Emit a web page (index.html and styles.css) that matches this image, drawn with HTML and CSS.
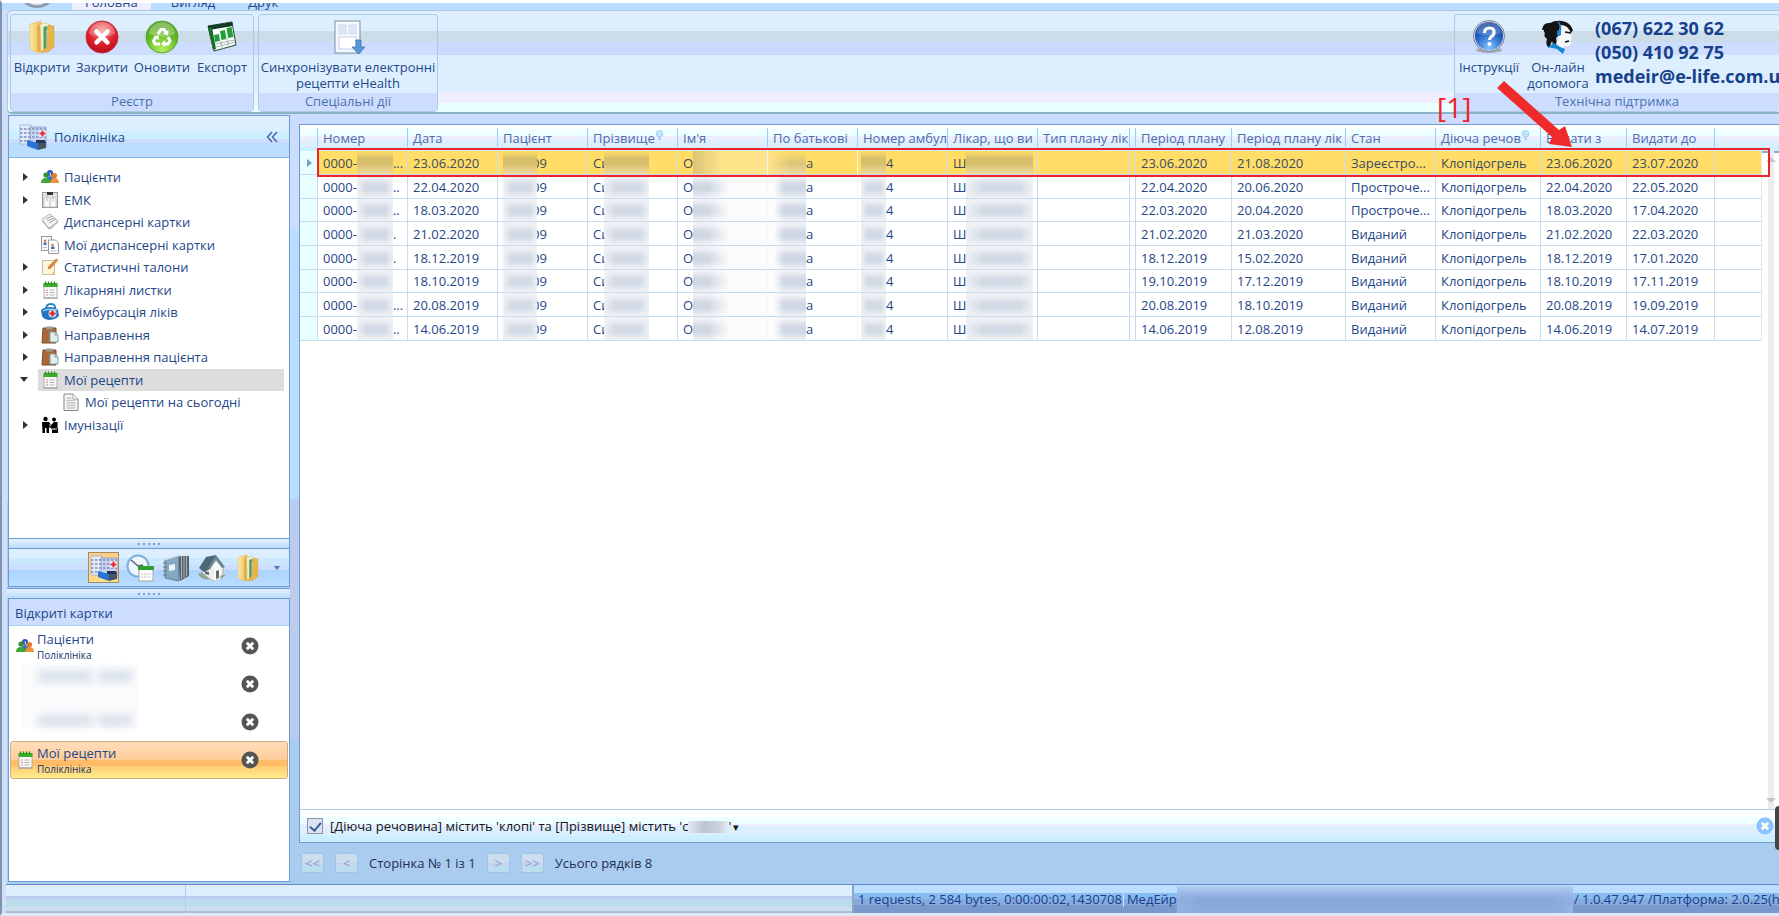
FILE: index.html
```
<!DOCTYPE html>
<html lang="uk">
<head>
<meta charset="utf-8">
<title>МедЕйр – Мої рецепти</title>
<link rel="stylesheet" href="styles.css">
</head>
<body>
<svg class="defs" aria-hidden="true">
  <defs>
    <linearGradient id="gFold" x1="0" x2="1"><stop offset="0" stop-color="#fbeaa4"/><stop offset="1" stop-color="#edbb4c"/></linearGradient>
    <radialGradient id="gRed" cx=".5" cy=".3" r=".7"><stop offset="0" stop-color="#f79a94"/><stop offset=".6" stop-color="#e0202c"/><stop offset="1" stop-color="#b80d18"/></radialGradient>
    <radialGradient id="gGreen" cx=".5" cy=".9" r=".9"><stop offset="0" stop-color="#b8ee62"/><stop offset=".6" stop-color="#62b822"/><stop offset="1" stop-color="#4d9a1c"/></radialGradient>
    <radialGradient id="gBlue" cx=".5" cy=".9" r=".9"><stop offset="0" stop-color="#7fc4ff"/><stop offset=".6" stop-color="#1f5fc4"/><stop offset="1" stop-color="#123f94"/></radialGradient>
    <symbol id="folder" viewBox="0 0 34 34">
      <path d="M5 4l11-3v31l-3 1-8-4z" fill="url(#gFold)" stroke="#e0bc62" stroke-width=".5"/>
      <path d="M15 4l7-1 3 2-3 26-6 2z" fill="#f3ecd0" stroke="#c9ab5c" stroke-width=".5"/>
      <path d="M18.500 7l4-1v20l-4 5z" fill="#4aa05c"/><path d="M21.500 10l2-1v18l-2 2z" fill="#dfe9e2"/>
      <path d="M23 5l6 1v21l-6 5h-7l6-5z" fill="#eab548" stroke="#d29c38" stroke-width=".5"/>
      <path d="M12 6l3-1v27l-3-1z" fill="#d9a03a" opacity=".6"/>
    </symbol>
    <symbol id="close" viewBox="0 0 34 34">
      <circle cx="17" cy="17" r="16" fill="url(#gRed)" stroke="#c03038"/>
      <path d="M4 14a13 12 0 0 1 26 0q-13 5-26 0z" fill="#fff" opacity=".25"/>
      <path d="M11.500 11.500l11 11m0-11l-11 11" stroke="#fff" stroke-width="4.500" stroke-linecap="round"/>
    </symbol>
    <symbol id="recycle" viewBox="0 0 34 34">
      <circle cx="17" cy="17" r="16" fill="url(#gGreen)" stroke="#5aa52c"/>
      <path d="M4 14a13 12 0 0 1 26 0q-13 5-26 0z" fill="#fff" opacity=".3"/>
      <g fill="none" stroke="#fff" stroke-width="3"><path d="M13 14l3-4.500h3l2.500 4"/><path d="M23 17l2 4-2 3h-4"/><path d="M15 24h-5l-1.500-3 2.500-4"/></g>
      <path d="M23.500 10l-.5 5.500-5-2zM20 20v7l-4-3.300zM8 17l5.500-2 .5 5z" fill="#fff"/>
    </symbol>
    <symbol id="export" viewBox="0 0 34 34">
      <path d="M3 6l24-4 4 23-22 6z" fill="#fff" stroke="#1c4a2c" stroke-width="1"/>
      <path d="M3 6l24-4 .7 4L4 10z" fill="#123c22"/><path d="M3 8l4-1 4 22-3 1z" fill="#1c6a30"/>
      <path d="M9 15l5-1 1 7-5 1zM15 11l5-1 1.500 9-5 1zM21.500 8l5-1 2 10-5.500 1z" fill="#23a03c"/>
      <path d="M10 24l20-4M11 27l19-5M16 21l1.500 8M22 19l1.500 8" stroke="#a9b4ae" stroke-width="1"/>
    </symbol>
    <symbol id="sync" viewBox="0 0 34 34">
      <rect x="4" y="1" width="25" height="32" fill="#f4f8fc" stroke="#7f9199"/>
      <rect x="8" y="5" width="7" height="9" fill="#dbe7f8" stroke="#c6d4ea" stroke-width=".7"/><rect x="18" y="5" width="7" height="9" fill="#dbe7f8" stroke="#c6d4ea" stroke-width=".7"/>
      <rect x="8" y="17" width="17" height="12" fill="#fff" stroke="#b6c8e4" stroke-width=".8"/>
      <path d="M25 20h5v7h4l-6.500 7L21 27h4z" fill="#5a96d8" stroke="#3d74b8" stroke-width=".8"/>
    </symbol>
    <symbol id="help" viewBox="0 0 34 34">
      <ellipse cx="17" cy="30" rx="13" ry="3" fill="#777" opacity=".5"/>
      <circle cx="17" cy="16" r="15.500" fill="#d4dae4" stroke="#7a8494"/>
      <circle cx="17" cy="16" r="14" fill="url(#gBlue)"/>
      <path d="M5 13a12 11 0 0 1 24 0q-12 5-24 0z" fill="#fff" opacity=".22"/>
      <path d="M12.500 13q0-5 5-5t4.500 4.500q0 2.500-2.500 4-2 1.200-2 3.500" fill="none" stroke="#fff" stroke-width="3.200"/><circle cx="17.500" cy="24" r="2" fill="#fff"/>
    </symbol>
    <symbol id="operator" viewBox="0 0 34 34">
      <path d="M1 10Q2 2 9 3q5-3 12-2 8 1 11 9l-2 3q-3-6-9-6-2 8-6 11l1 5-4 4q0-4-1-6l-3 7q-4-3-2-9-4-3-2-6-2-1-1-3z" fill="#141414"/>
      <path d="M19 5q9 0 10 8l2 4-1 3q1 5-2 6l-5 0-1 3-7-6q3-4 3-8z" fill="#f6f8fa"/>
      <path d="M24 12l6 1M24 22l4-1" stroke="#141414" stroke-width="1.600"/>
      <path d="M17 2q4 4 2 10" fill="none" stroke="#1288d0" stroke-width="1.500"/><rect x="16" y="10" width="4" height="6" rx="2" fill="#1288d0"/>
      <path d="M7 27l6-4 6 4 5 2-2 5-6-5z" fill="#1288d0"/>
    </symbol>
    <symbol id="clinic" viewBox="0 0 28 28">
      <path d="M1 2h11v19H1z" fill="#e4eaf6" stroke="#9aa9cc" stroke-width=".7"/><path d="M11 4h16v20H11z" fill="#c8d4ee" stroke="#7a8cc0" stroke-width=".7"/>
      <path d="M1 6h26M1 10h26M1 14h26M1 18h10" stroke="#7a8fc4" stroke-width="1.300" stroke-dasharray="2.500 1.500"/>
      <path d="M8 17l11 3v7L8 23z" fill="#2a74d8"/><path d="M19 18h8v7l-8 2z" fill="#4a5468"/><rect x="17" y="17" width="9" height="3" fill="#22335c"/>
      <circle cx="23.500" cy="10.500" r="3.800" fill="#f2f4fa"/><path d="M23.500 7.500v6m-3-3h6" stroke="#e02838" stroke-width="2"/>
    </symbol>
    <symbol id="people" viewBox="0 0 18 18">
      <circle cx="9" cy="5" r="3" fill="#2c55b4"/><path d="M5 14q0-6 4-6t4 6z" fill="#3d6cc8"/><path d="M9 4.500l.8 3" stroke="#fff"/>
      <circle cx="5" cy="7" r="2.600" fill="#2f8f2c"/><path d="M0 15q0-5 5-5t4.500 5z" fill="#3fa835"/>
      <circle cx="13.500" cy="7.500" r="2.600" fill="#e57a20"/><path d="M9.500 15q0-5 4-5t4.500 5z" fill="#f09238"/>
    </symbol>
    <symbol id="emk" viewBox="0 0 18 18">
      <rect x="1.500" y="1.500" width="15" height="15" fill="#e4e4e4" stroke="#999"/><rect x="6" y="1" width="6" height="3" fill="#333"/>
      <path d="M3 16V8l3-3 3 3 3-3 3 3v8z" fill="#fafafa" stroke="#b4b4b4" stroke-width=".7"/><path d="M9 8v8M6 6v4M12 6v4" stroke="#b0b0b0"/>
    </symbol>
    <symbol id="cards" viewBox="0 0 18 18">
      <path d="M1 6l8-5 8 7-7 8-3-1z" fill="#f4f4f4" stroke="#aaa" stroke-width=".9"/><path d="M1 8l7 7 9-6M5 6l6-3M6 8l7-3M8 10l7-4" fill="none" stroke="#9a9a9a" stroke-width=".9"/>
    </symbol>
    <symbol id="mycards" viewBox="0 0 18 18">
      <rect x=".5" y=".5" width="10" height="14" fill="#f5f7f9" stroke="#999"/><path d="M7.500 4h7l3 3v10.500h-10z" fill="#fff" stroke="#999"/>
      <circle cx="4" cy="5" r="1.300" fill="#c98a4a"/><rect x="2.500" y="6.500" width="3" height="2.500" fill="#3c78c0"/><circle cx="11.500" cy="9" r="1.300" fill="#c98a4a"/><rect x="10" y="10.500" width="3.500" height="2.500" fill="#3c78c0"/><path d="M9.500 15h6M2 11.500h4" stroke="#bbb"/>
    </symbol>
    <symbol id="note" viewBox="0 0 18 18">
      <path d="M1.500 2.500h12v14h-12z" fill="#fdf4de" stroke="#c9bfa4"/><path d="M10 17l4-1v-4" fill="#f0c060"/><path d="M7 11l1-3 7-7 2 1-7 8z" fill="#e08a3c" stroke="#b8692a" stroke-width=".5"/>
    </symbol>
    <symbol id="calendar" viewBox="0 0 18 18">
      <rect x="3" y="3" width="13" height="14" fill="#fafafa" stroke="#b0b0b0"/><rect x="2.500" y="2" width="14" height="4" fill="#3fae2c"/><path d="M4.500 .5v3M7.500 .5v3M10.500 .5v3M13.500 .5v3" stroke="#2a8a20" stroke-width="1.300"/>
      <path d="M5 9h2M5 11.500h2M5 14h2" stroke="#e08080"/><path d="M8.500 9h5M8.500 11.500h5M8.500 14h5" stroke="#b4b4b4"/><path d="M2.500 17h14" stroke="#999"/>
    </symbol>
    <symbol id="medkit" viewBox="0 0 18 18">
      <path d="M5 6q0-5 5-5t4 5" fill="none" stroke="#2d7fc8" stroke-width="1.800"/><path d="M0 7q3-3 9-3t8 3l1 6q-4 4-10 4-6-1-7-4z" fill="#2274c0"/><path d="M2 8q4-3 14-1" stroke="#8ccaf4" stroke-width="1.500" fill="none"/>
      <circle cx="11.500" cy="10.500" r="4" fill="#cfe0f4"/><path d="M11.500 7.500v6M8.500 10.500h6" stroke="#e0222c" stroke-width="2.200"/>
    </symbol>
    <symbol id="clipboard" viewBox="0 0 18 18">
      <path d="M2 2h13v15H1z" fill="#a9683a" stroke="#7d4822"/><rect x="5" y=".5" width="7" height="3" rx="1" fill="#9c9c94"/><path d="M9 6h5l3 3v7H9z" fill="#e3eef0" stroke="#85a0a4"/><path d="M14 6v3h3" fill="none" stroke="#85a0a4"/>
    </symbol>
    <symbol id="page" viewBox="0 0 18 18">
      <path d="M2 1h9l5 5v11.500H2z" fill="#f8f8f8" stroke="#858585"/><path d="M11 1v5h5" fill="#fff" stroke="#a0a0a0"/><path d="M4.500 5h5M4.500 7.500h9M4.500 10h9M4.500 12.500h9M4.500 15h9" stroke="#c4c4c4" stroke-width="1.400"/>
    </symbol>
    <symbol id="vaccine" viewBox="0 0 18 18">
      <circle cx="4.500" cy="3" r="2.200"/><circle cx="13" cy="3.500" r="2"/><path d="M1 6h7l2 3 3-3h3.500v6H17v5h-6v-4l-3-2v6H5.500v-5H4v5H1.500z"/><path d="M11 13h5M8.500 8.500l1.500 2" stroke="#fff"/>
    </symbol>
    <symbol id="schedule" viewBox="0 0 28 28">
      <circle cx="12" cy="12" r="10.500" fill="#f1f6fa" stroke="#7ab0dc" stroke-width="2"/><path d="M5 6l7 6 5-1" fill="none" stroke="#55606c" stroke-width="1.300"/>
      <rect x="13" y="13" width="14" height="14" fill="#fff" stroke="#a0a8a0"/><rect x="12" y="12" width="16" height="4" fill="#2f9f2c"/><path d="M15 20h10M15 23h10" stroke="#b8c0b8" stroke-dasharray="2 1"/>
    </symbol>
    <symbol id="books" viewBox="0 0 28 28">
      <path d="M16 2l11 0v20l-9 5z" fill="#59636c"/><path d="M19.500 2v23M22 2v22M24.500 2v20" stroke="#c0cad2" stroke-width=".8"/><path d="M3 6l14-4v25L3 24z" fill="#86a8c2" stroke="#506a7c" stroke-width=".8"/><path d="M7 11l6-1v6l-6 1z" fill="#eef5fa"/><path d="M1 9h4M1 13h4M1 17h4M1 21h4" stroke="#6c747c"/><path d="M3 6l13-4 11-1" stroke="#d8e2ea" fill="none"/>
    </symbol>
    <symbol id="house" viewBox="0 0 28 28">
      <path d="M4 13l9-8 12 6v12l-9 4-11-5z" fill="#efefec" stroke="#9c9c94" stroke-width=".7"/><path d="M1 14L8 3l10-2-6 14-6 3z" fill="#4c6878"/><path d="M18 1l9 12-3 1-6-8-6 9-2-1z" fill="#6c8694"/><path d="M18 7l5 7v10l-7 3V12z" fill="#fafaf7"/><path d="M18 17l3-1v8l-3 1z" fill="#5c6e78"/><path d="M7 17l4 1v3l-4-1z" fill="#5c6e78"/><path d="M0 20q3-3 6 0l6 5q-8 2-12-5zM22 22q4-2 6-1l-5 4z" fill="#8ca892"/>
    </symbol>
    <symbol id="x" viewBox="0 0 18 18"><circle cx="9" cy="9" r="8.500"/><path d="M5.800 5.800l6.400 6.400m0-6.400l-6.400 6.400" stroke="#fff" stroke-width="2.800"/></symbol>
    <symbol id="funnel" viewBox="0 0 10 14"><circle cx="5" cy="4" r="3.500" fill="#d5edff" stroke="#88c4f4"/><path d="M3 4.500h4" stroke="#88c4f4"/><path d="M5 8v3" stroke="#88c4f4" stroke-width="2"/></symbol>
  </defs>
</svg>

<div class="window">
  <nav class="tabs">
    <span class="orb"></span>
    <a class="tab active" href="#">Головна</a><a class="tab" href="#">Вигляд</a><a class="tab" href="#">Друк</a>
  </nav>

  <header class="ribbon">
    <section class="group">
      <div class="tools">
        <button class="tool"><svg><use href="#folder"/></svg>Відкрити</button>
        <button class="tool"><svg><use href="#close"/></svg>Закрити</button>
        <button class="tool"><svg><use href="#recycle"/></svg>Оновити</button>
        <button class="tool"><svg><use href="#export"/></svg>Експорт</button>
      </div>
      <h2 class="caption">Реєстр</h2>
    </section>
    <section class="group">
      <div class="tools">
        <button class="tool wide"><svg><use href="#sync"/></svg>Синхронізувати електронні<br>рецепти eHealth</button>
      </div>
      <h2 class="caption">Спеціальні дії</h2>
    </section>
    <section class="group support">
      <div class="tools">
        <button class="tool help"><svg><use href="#help"/></svg>Інструкції</button>
        <button class="tool online"><svg><use href="#operator"/></svg>Он-лайн<br>допомога</button>
        <div class="contacts"><span>(067) 622 30 62</span><span>(050) 410 92 75</span><span>medeir@e-life.com.ua</span></div>
      </div>
      <h2 class="caption">Технічна підтримка</h2>
    </section>
  </header>

  <div class="body">
    <aside class="side">
      <section class="panel nav">
        <div class="nav-head"><svg><use href="#clinic"/></svg><h2>Поліклініка</h2><button class="collapse" aria-label="Згорнути"><svg viewBox="0 0 12 12"><path d="M6 1L1.500 6 6 11M11 1L6.500 6 11 11" fill="none" stroke="#4466aa" stroke-width="1.500"/></svg></button></div>
        <ul class="tree">
          <li><i class="arrow"></i><svg><use href="#people"/></svg><span>Пацієнти</span></li>
          <li><i class="arrow"></i><svg><use href="#emk"/></svg><span>ЕМК</span></li>
          <li><i></i><svg><use href="#cards"/></svg><span>Диспансерні картки</span></li>
          <li><i></i><svg><use href="#mycards"/></svg><span>Мої диспансерні картки</span></li>
          <li><i class="arrow"></i><svg><use href="#note"/></svg><span>Статистичні талони</span></li>
          <li><i class="arrow"></i><svg><use href="#calendar"/></svg><span>Лікарняні листки</span></li>
          <li><i class="arrow"></i><svg><use href="#medkit"/></svg><span>Реімбурсація ліків</span></li>
          <li><i class="arrow"></i><svg><use href="#clipboard"/></svg><span>Направлення</span></li>
          <li><i class="arrow"></i><svg><use href="#clipboard"/></svg><span>Направлення пацієнта</span></li>
          <li class="selected"><i class="arrow open"></i><svg><use href="#calendar"/></svg><span>Мої рецепти</span></li>
          <li class="child"><i></i><svg><use href="#page"/></svg><span>Мої рецепти на сьогодні</span></li>
          <li><i class="arrow"></i><svg><use href="#vaccine"/></svg><span>Імунізації</span></li>
        </ul>
        <div class="grip"></div>
        <div class="shortcuts">
          <button class="current" aria-label="Поліклініка"><svg><use href="#clinic"/></svg></button>
          <button aria-label="Розклад"><svg><use href="#schedule"/></svg></button>
          <button aria-label="Довідники"><svg><use href="#books"/></svg></button>
          <button aria-label="Стаціонар"><svg><use href="#house"/></svg></button>
          <button aria-label="Папки"><svg><use href="#folder"/></svg></button>
          <button class="more" aria-label="Ще"><i></i></button>
        </div>
      </section>
      <div class="grip outer"></div>
      <section class="panel open-cards">
        <h2 class="open-head">Відкриті картки</h2>
        <div class="card"><svg><use href="#people"/></svg><div class="card-text"><b>Пацієнти</b><small>Поліклініка</small></div><button aria-label="Закрити"><svg><use href="#x"/></svg></button></div>
        <div class="card"><div class="smear"></div><button aria-label="Закрити"><svg><use href="#x"/></svg></button></div>
        <div class="card"><div class="smear last"></div><button aria-label="Закрити"><svg><use href="#x"/></svg></button></div>
        <div class="card active"><svg><use href="#calendar"/></svg><div class="card-text"><b>Мої рецепти</b><small>Поліклініка</small></div><button aria-label="Закрити"><svg><use href="#x"/></svg></button></div>
      </section>
    </aside>

    <main class="content">
      <div class="gridbox">
        <div class="tablewrap">
          <table>
            <colgroup><col class="c18"><col class="c90"><col class="c90"><col class="c90"><col class="c90"><col class="c90"><col class="c90"><col class="c90"><col class="c90"><col class="c92"><col class="c6"><col class="c96"><col class="c114"><col class="c90"><col class="c105"><col class="c86"><col class="c88"><col></colgroup>
            <thead><tr><th></th><th>Номер</th><th>Дата</th><th>Пацієнт</th><th>Прізвище<svg class="fn"><use href="#funnel"/></svg></th><th>Ім'я</th><th>По батькові</th><th>Номер амбул</th><th>Лікар, що ви</th><th>Тип плану лік</th><th></th><th>Період плану</th><th>Період плану лік</th><th>Стан</th><th>Діюча речов<svg class="fn"><use href="#funnel"/></svg></th><th>Видати з</th><th>Видати до</th><th></th></tr></thead>
            <tbody id="rows"></tbody>
          </table>
          <div class="scroll"><i class="up"></i><i class="down"></i></div>
          <div class="mark"></div>
        </div>
        <div class="filter">
          <input type="checkbox" id="flt" checked><label for="flt">[Діюча речовина] містить 'клопі' та [Прізвище] містить 'с<span class="veil"></span>'<span class="tri">▾</span></label>
          <button aria-label="Очистити фільтр"><svg><use href="#x"/></svg></button>
        </div>
      </div>
      <div class="pager"><button>&lt;&lt;</button><button>&lt;</button><span>Сторінка № 1 із 1</span><button>&gt;</button><button>&gt;&gt;</button><span>Усього рядків 8</span></div>
    </main>
  </div>

  <footer class="status">
    <div class="st-left"></div><div class="st-mid"></div>
    <div class="st-right"><span class="req">1 requests, 2 584 bytes, 0:00:00:02,1430708</span><span class="app">МедЕйр</span><span class="blurred"></span><span class="ver">/ 1.0.47.947 /Платформа: 2.0.25(hf</span></div>
  </footer>

  <div class="callout">[1]</div>
  <svg class="pointer" viewBox="0 0 80 72"><path d="M9 3L2 10L57 59L54 66L77 69L70 48L64 52Z" fill="#ee2a2a"/></svg>
  <div class="handle"></div>
</div>
<script src="rows.js"></script>
</body>
</html>
```
FILE: rows.js
```
const rows = [
  ["...", "23.06.2020", "23.06.2020", "21.08.2020", "Зареєстро...", "23.06.2020", "23.07.2020"],
  ["..", "22.04.2020", "22.04.2020", "20.06.2020", "Простроче...", "22.04.2020", "22.05.2020"],
  ["..", "18.03.2020", "22.03.2020", "20.04.2020", "Простроче...", "18.03.2020", "17.04.2020"],
  [".", "21.02.2020", "21.02.2020", "21.03.2020", "Виданий", "21.02.2020", "22.03.2020"],
  [".", "18.12.2019", "18.12.2019", "15.02.2020", "Виданий", "18.12.2019", "17.01.2020"],
  ["", "18.10.2019", "19.10.2019", "17.12.2019", "Виданий", "18.10.2019", "17.11.2019"],
  ["...", "20.08.2019", "20.08.2019", "18.10.2019", "Виданий", "20.08.2019", "19.09.2019"],
  ["..", "14.06.2019", "14.06.2019", "12.08.2019", "Виданий", "14.06.2019", "14.07.2019"]
];
const veil = (before, kind, after) =>
  `<td class="veiled ${kind}"><div>${before}<i></i>${after}</div></td>`;
document.getElementById("rows").innerHTML = rows.map((r, n) => `<tr${n === 0 ? ' class="current"' : ""}>
  <td class="ind">${n === 0 ? "<i></i>" : ""}</td>
  ${veil("0000-", "v-num", r[0])}<td>${r[1]}</td>
  ${veil("", "v-pat", "09")}${veil("Си", "v-sur", "")}${veil("О", "v-name", "")}
  ${veil("", "v-mid", "а")}${veil("", "v-amb", "4")}${veil("Ш", "v-doc", "")}
  <td></td><td></td><td>${r[2]}</td><td>${r[3]}</td><td>${r[4]}</td><td>Клопідогрель</td>
  <td>${r[5]}</td><td>${r[6]}</td><td></td></tr>`).join("");
```
FILE: styles.css
```
* { box-sizing: border-box; }
body { margin: 0; font: 13px/16px "Open Sans", "Noto Sans", sans-serif; color: #1f4788; }
h2 { margin: 0; font: inherit; }
button { font: inherit; color: inherit; background: none; border: 0; padding: 0; }
i { font-style: normal; }
.defs { position: absolute; width: 0; height: 0; }
.window { position: relative; display: flex; flex-direction: column; height: 100vh; overflow: hidden; border-left: 2px solid #7f93b4; border-top: 3px solid #fff; border-bottom: 3px solid #dde8f4; padding-left: 5px; background: #cfe0f6; white-space: nowrap; }

.tabs { display: flex; align-items: flex-end; height: 7px; flex: none; background: #bbddff; overflow: hidden; margin-left: -5px; padding-left: 15px; }
.orb { width: 40px; height: 40px; margin: 0 15px 2px 0; border: 3px solid #8e9db0; border-radius: 50%; background: #e8edf4; }
.tab { height: 16px; line-height: 16px; padding: 0 13px; margin-right: 7px; color: #1f4788; text-decoration: none; }
.tab.active { background: #eeeeff; }

.ribbon { display: flex; gap: 4px; flex: none; height: 104px; padding: 3px 0 0 2px; border: 1px solid #a8c8e4; border-bottom: 2px solid #88b4c4; border-right: 0; border-radius: 5px 0 0 5px; background: linear-gradient(#ddeeff 20px, #ccdde9 20px 31px, #ccd9ff 31px 44px, #ddeeff 44px 81px, #eeeeff 81px 92px, #e8ffff 92px); }
.group { display: flex; flex-direction: column; height: 98px; border: 1px solid #aec9e6; border-radius: 4px; background: linear-gradient(#ddeeff 16px, #ccdde9 16px 27px, #ccddff 27px 40px, #ddeeff 40px); overflow: hidden; }
.tools { display: flex; flex: 1; padding: 5px 1px 0; }
.tool { display: flex; flex-direction: column; align-items: center; width: 60px; flex: none; }
.tool svg { width: 34px; height: 34px; margin-bottom: 5px; flex: none; }
.tool.wide { width: 176px; }
.caption { height: 18px; line-height: 17px; text-align: center; background: #ccddff; color: #4c72ac; }
.support { margin-left: auto; width: 325px; flex: none; overflow: visible; border-right: 0; }
.support .tool.help { width: 66px; }
.support .tool.online { width: 72px; }
.contacts { display: flex; flex-direction: column; font-size: 18px; font-weight: 700; line-height: 24px; padding-left: 1px; margin-top: -4px; color: #17408c; }

.body { display: flex; flex: 1; min-height: 0; background: linear-gradient(#ccdcff 15%, #bbddff 15% 50%, #bbccee 50% 81%, #aaccee 81%); }
.side { display: flex; flex-direction: column; width: 283px; flex: none; padding: 1px 0 2px; }
.panel { display: flex; flex-direction: column; border: 1px solid #6c9cd4; background: #fff; margin-left: 1px; }
.nav { flex: none; height: 472px; }
.nav-head { display: flex; align-items: center; height: 42px; flex: none; padding: 0 11px 0 10px; gap: 7px; border-bottom: 1px solid #86b4e4; background: linear-gradient(#ddeeff 36%, #cceeff 36% 55%, #ccddff 55% 66%, #bbddff 66%); }
.nav-head svg { width: 28px; height: 28px; }
.nav-head .collapse { margin-left: auto; line-height: 0; }
.nav-head .collapse svg { width: 12px; height: 12px; }
.tree { list-style: none; margin: 0; padding: 8px 5px 0 14px; display: grid; grid-template-rows: repeat(12, 1fr); height: 278px; margin-bottom: auto; }
.tree li { display: flex; align-items: center; }
.tree li svg { width: 18px; height: 18px; margin: 0 5px 0 3px; }
.tree li.child { padding-left: 21px; }
.tree i { width: 15px; flex: none; }
.arrow::before { content: ""; display: block; width: 0; border: 4px solid transparent; border-left: 5px solid #333; border-right: 0; }
.arrow.open::before { border: 4px solid transparent; border-top: 5px solid #333; border-bottom: 0; margin-left: -3px; }
.tree .selected { background: linear-gradient(#dddddd, #dddddd) no-repeat 15px 0; }
.grip { height: 11px; flex: none; border: 0 solid #6c9cd4; border-width: 1px 0; background: linear-gradient(#e4f0ff, #bbddff); display: flex; align-items: center; justify-content: center; }
.grip::before { content: ""; width: 22px; height: 2px; background: repeating-linear-gradient(90deg, #7c9cc8 0 2px, transparent 2px 5px); }
.grip.outer { margin-top: 1px; height: 10px; border-bottom: 0; }
.shortcuts { display: flex; align-items: center; justify-content: flex-end; height: 37px; flex: none; gap: 5px; padding-right: 4px; background: linear-gradient(#ddeeff 25%, #cce8ff 25% 44%, #ccddff 44% 56%, #aad4ff 56%, #bbddff); }
.shortcuts button { width: 31px; height: 31px; display: grid; place-items: center; }
.shortcuts svg { width: 28px; height: 28px; }
.shortcuts .current { border: 1px solid #a08c68; background: linear-gradient(#ffcc88, #ffdd88); }
.shortcuts .more { width: 17px; }
.more i { border: 3px solid transparent; border-top: 4px solid #4c78b8; border-bottom: 0; }
.open-cards { flex: 1; }
.open-head { height: 27px; line-height: 29px; padding-left: 6px; background: #ccddff; border-bottom: 1px solid #aaccee; margin-bottom: 1px; }
.card { display: flex; align-items: center; height: 38px; flex: none; margin: 0 1px; padding: 0 28px 0 5px; gap: 3px; border: 1px solid transparent; border-radius: 3px; }
.card svg { width: 18px; height: 18px; flex: none; }
.card button { margin-left: auto; line-height: 0; fill: #555; }
.card-text { display: flex; flex-direction: column; }
.card b { font-weight: 400; line-height: 18px; }
.card small { font-size: 10px; line-height: 14px; color: #17306c; }
.card.active { border-color: #d0a888; background: linear-gradient(#ffddbb, #ffcc99 50%, #ffbb66 50% 68%, #ffcc77 68%, #ffee88); }
.smear { width: 116px; height: 38px; margin-left: 6px; position: relative; background: #fafbfc; }
.smear::before, .smear::after { content: ""; position: absolute; left: 16px; top: 6px; width: 54px; height: 11px; background: #cfd9e6; filter: blur(4px); opacity: .8; }
.smear::after { left: 76px; width: 34px; }
.smear.last { height: 24px; align-self: flex-start; }
.smear.last::before, .smear.last::after { top: 11px; }

.content { display: flex; flex-direction: column; flex: 1; min-width: 0; padding: 10px 0 0 9px; }
.gridbox { display: flex; flex-direction: column; flex: 1; background: #fff; border: 1px solid #6c9cd4; border-right: 0; min-height: 0; }
.tablewrap { position: relative; display: flex; flex: 1; min-height: 0; }
.tablewrap::before { content: ""; position: absolute; left: 0; right: 0; top: 0; height: 26px; background: linear-gradient(#fff 4px, #eeffff 4px 11px, #eeeeff 11px 15px, #ddeeff 15px 22px, #cceeff 22px); border-bottom: 2px solid #88acd8; }
table { position: relative; border-collapse: separate; border-spacing: 0; table-layout: fixed; flex: 1; width: 100%; align-self: flex-start; }
.c18 { width: 18px; } .c90 { width: 90px; } .c92 { width: 92px; } .c6 { width: 6px; } .c96 { width: 96px; } .c114 { width: 114px; } .c105 { width: 105px; } .c86 { width: 86px; } .c88 { width: 88px; }
th, td { padding: 0 0 0 5px; text-align: left; font-weight: 400; overflow: hidden; }
th { height: 26px; line-height: 16px; color: #4c6cac; background: linear-gradient(#99ccff, #99ccff) no-repeat 100% 3px / 1px 19px; background-origin: border-box; padding-bottom: 1px; }
th:last-child { background: none; }
.fn { width: 9px; height: 13px; vertical-align: top; }
td { height: 24px; border: 0 solid #c8dcf0; border-width: 0 1px 1px 0; background: #fff; }
tbody tr:nth-child(3n) td { height: 23px; }
td.ind { background: #e8ffff; padding: 0 0 0 7px; }
td.ind i { display: block; width: 0; border: 4px solid transparent; border-left: 5px solid #7c9ccc; border-right: 0; }
.current td:not(.ind) { background: #ffdd66; color: #3c4c60; }
td:last-child { border-right-color: #e8e8e8; }
.veiled div { display: flex; align-items: center; height: 22px; }
.veiled i { position: relative; flex: none; align-self: stretch; margin: -1px 0 -2px; background: linear-gradient(90deg, #eef1f5, transparent 25% 80%, #eef1f5), linear-gradient(#eef1f5 10%, #d3dae5 40% 60%, #eef1f5 90%); }
.current .veiled i { background: linear-gradient(#ffdd66, #d8bf6c 30% 50%, #f0e0a8); }
.v-num i { width: 36px; }
.veiled.v-pat i { width: 34px; margin-right: -5px; }
.veiled.v-sur i { width: 45px; margin-left: -5px; }
.veiled.v-name i { width: 26px; flex: 1 0 auto; background: linear-gradient(90deg, transparent 20%, #fcfcfd 50%), linear-gradient(#eef1f5 10%, #cfd7e3 40% 60%, #eef1f5 90%); }
.v-name, .v-mid { border-right-color: #f4f6f8; }
.current .veiled.v-name i { background: linear-gradient(90deg, #dcc478, #ffe48c 40%); }
.v-mid { padding-left: 0; }
.veiled.v-mid i { width: 38px; background: linear-gradient(90deg, #fcfcfd 6px, transparent 16px), linear-gradient(#eef1f5 10%, #cfd7e3 40% 60%, #eef1f5 90%); }
.current .veiled.v-mid i { background: linear-gradient(90deg, #ffe48c, transparent 60%), linear-gradient(#ffdd66, #dcc478 50%, #f0e0a8); }
.v-amb { padding-left: 3px; } .v-amb i { width: 25px; }
.v-doc i { width: 67px; }
.scroll { position: relative; width: 17px; flex: none; margin-top: 26px; display: flex; flex-direction: column; justify-content: space-between; align-items: center; padding: 6px 0; background: linear-gradient(90deg, transparent 6px, #ececec 6px 12px, transparent 12px); }
.scroll i { border: 5px solid transparent; }
.scroll .up { border-bottom-color: #c4c4cc; border-top: 0; }
.scroll .down { border-top-color: #c4c4cc; border-bottom: 0; }
.mark { position: absolute; left: 17px; right: 9px; top: 23px; height: 29px; border: 2px solid #ee2228; }
.filter { display: flex; align-items: center; height: 33px; flex: none; padding: 0 5px 0 7px; gap: 7px; color: #151515; border-top: 1px solid #aaccee; background: linear-gradient(#fff 7px, #eeffff 7px 14px, #eeeeff 14px 16px, #ddeeff 16px 25px, #cceeff 25px); }
.filter input { appearance: none; width: 16px; height: 16px; margin: 0; border: 1px solid #8a94a4; background: #dce4f2; display: grid; place-items: center; }
.filter input::before { content: ""; width: 5px; height: 9px; margin-bottom: 2px; border: solid #3a5c9c; border-width: 0 2px 2px 0; transform: rotate(40deg); }
.veil { display: inline-block; width: 40px; height: 12px; margin-bottom: -2px; background: linear-gradient(90deg, #e4eaf4, #bcc4d0 40%, #ccd4e0 80%, #e4eaf4); }
.tri { font-size: 11px; margin-left: 2px; }
.filter button { margin-left: auto; line-height: 0; fill: #88c4ff; }
.filter button svg { width: 18px; height: 18px; }
.pager { display: flex; align-items: center; height: 41px; flex: none; padding: 0 0 2px 2px; gap: 11px; color: #1e2f55; }
.pager button { width: 23px; height: 20px; line-height: 16px; border: 1px solid #a0c4e8; border-radius: 2px; background: linear-gradient(#ccddee 48%, #ccccee 48% 60%, #bbddee 60%); color: #8899cc; }

.status { display: flex; height: 29px; flex: none; border-top: 1px solid #6688cc; margin-left: -1px; background: linear-gradient(#ddeeff 11px, #bbccee 11px 14px, #bbddee 14px 22px, #ccddee 22px 26px, #a8c0d0 26px); }
.st-left { width: 180px; border-right: 1px solid #b4c8e4; }
.st-mid { flex: 1; border-right: 2px solid #8ca8cc; }
.st-right { display: flex; align-items: center; width: 925px; flex: none; overflow: hidden; background: linear-gradient(#bbddff 8px, #88bbee 8px 14px, #88aadd 14px 20px, #7799cc 20px); color: #17408c; }
.req { padding: 0 1px 0 4px; border-right: 1px solid #cce0ff; flex: none; }
.app { padding-left: 3px; flex: none; width: 53px; }
.blurred { width: 396px; height: 27px; flex: none; background: linear-gradient(90deg, rgba(170, 196, 236, .3), transparent 6% 94%, rgba(170, 196, 236, .3)), linear-gradient(#b4d0f4, #88a8dc 45% 70%, #8cacdc); }
.ver { padding-left: 1px; }

.callout { position: absolute; left: 1435px; top: 86px; font-size: 28px; line-height: 36px; color: #ee2228; }
.pointer { position: absolute; left: 1493px; top: 75px; width: 80px; height: 72px; }
.handle { position: absolute; right: 0; top: 803px; width: 4px; height: 44px; border-radius: 4px 0 0 4px; background: #444; }
```
